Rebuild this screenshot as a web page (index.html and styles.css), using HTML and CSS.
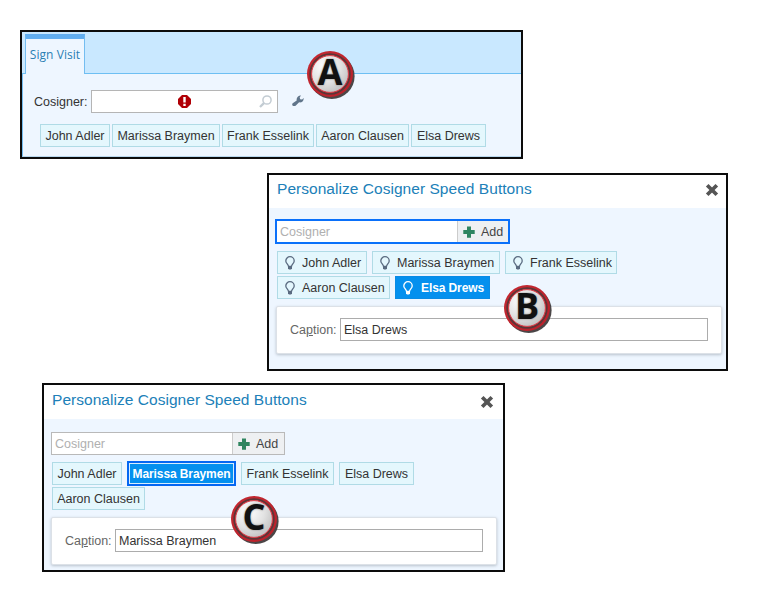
FILE: index.html
```html
<!DOCTYPE html>
<html lang="en">
<head>
<meta charset="utf-8">
<title>Cosigner speed buttons</title>
<link rel="stylesheet" href="styles.css">
</head>
<body>
<svg class="defs" width="0" height="0" aria-hidden="true">
  <defs>
    <radialGradient id="face" cx=".35" cy=".3" r=".8"><stop offset="0" stop-color="#fff"/><stop offset=".55" stop-color="#e2e2e2"/><stop offset="1" stop-color="#bdbdbd"/></radialGradient>
    <linearGradient id="ring" x1="0" y1="0" x2="1" y2="1"><stop offset="0" stop-color="#c9202a"/><stop offset=".2" stop-color="#c22831"/><stop offset="1" stop-color="#b9202a"/></linearGradient>
    <symbol id="disc" viewBox="0 0 50 50">
      <circle cx="25.8" cy="26.2" r="22.8" fill="#4b4647"/>
      <circle cx="24" cy="24" r="23" fill="url(#ring)"/>
      <circle cx="24" cy="24" r="19.8" fill="none" stroke="#5d3638" stroke-width="1.8"/>
      <circle cx="24" cy="24" r="18.4" fill="url(#face)" stroke="#d9404a" stroke-width="1"/>
    </symbol>
    <symbol id="bulb" viewBox="0 0 12 14"><path d="M4.500 10.300C4.300 8.200 1.800 7.300 1.800 4.900a4.200 4.200 0 0 1 8.400 0C10.200 7.300 7.700 8.200 7.500 10.300Z" fill="none" stroke="currentColor" stroke-width="1.3"/><path d="M4 10h4v2.600l-1 1H5l-1-1Z" fill="currentColor"/></symbol>
    <symbol id="plus" viewBox="0 0 12 12"><path d="M4 .5h4V4h3.700v4H8v3.700H4V8H.3V4H4Z" fill="#2f8560"/></symbol>
    <symbol id="close" viewBox="0 0 14 14"><path d="M2.200 2.200 11.800 11.800M11.800 2.200 2.200 11.800" stroke="#555" stroke-width="3.700"/></symbol>
  </defs>
</svg>
<main>
  <section class="panel sign">
    <header class="tabs"><div class="tab">Sign Visit</div></header>
    <div class="sign-body">
      <div class="field">
        <label>Cosigner:</label>
        <div class="lookup">
          <svg class="error" viewBox="0 0 13 13"><path d="M4 0h5l4 4v5l-4 4H4L0 9V4Z" fill="#b00006"/><path d="M5.300 2h2.400v5.500H5.300ZM5.300 8.700h2.400v2.200H5.300Z" fill="#fff"/></svg>
          <svg class="search" viewBox="0 0 13 13"><circle cx="8" cy="5" r="4.100" fill="none" stroke="#c3ccd3" stroke-width="1.500"/><path d="M4.900 8.100 1 12" stroke="#c3ccd3" stroke-width="2.300"/></svg>
        </div>
        <svg class="wrench" viewBox="0 0 12 12"><path d="M.7 8.300 4.700 5.500C4.200 2.700 6.100.4 9.100.5L7.700 2.300l.5 1.900 1.900.3 1.500-1.500C12 5.800 9.700 7.800 7.100 7.300L3.600 10.700C1.600 12-.9 10 .7 8.300Z" fill="#60758a"/></svg>
      </div>
      <div class="buttons">
        <span class="btn w70">John Adler</span><span class="btn w108">Marissa Braymen</span><span class="btn w92">Frank Esselink</span><span class="btn w93">Aaron Clausen</span><span class="btn w75">Elsa Drews</span>
      </div>
    </div>
    <div class="badge"><svg><use href="#disc"/></svg><b>A</b></div>
  </section>

  <section class="panel dialog bulbs">
    <header class="title"><h2>Personalize Cosigner Speed Buttons</h2><svg class="x"><use href="#close"/></svg></header>
    <div class="content">
      <div class="combo focused"><span class="hint">Cosigner</span><span class="add"><svg><use href="#plus"/></svg><span>Add</span></span></div>
      <div class="buttons">
        <span class="btn w90"><svg><use href="#bulb"/></svg>John Adler</span><span class="btn w128"><svg><use href="#bulb"/></svg>Marissa Braymen</span><span class="btn w112"><svg><use href="#bulb"/></svg>Frank Esselink</span>
      </div>
      <div class="buttons">
        <span class="btn w113"><svg><use href="#bulb"/></svg>Aaron Clausen</span><span class="btn w95 active"><svg><use href="#bulb"/></svg>Elsa Drews</span>
      </div>
      <div class="card"><label>Ca<u>p</u>tion:</label><div class="input">Elsa Drews</div></div>
    </div>
    <div class="badge"><svg><use href="#disc"/></svg><b>B</b></div>
  </section>

  <section class="panel dialog plain">
    <header class="title"><h2>Personalize Cosigner Speed Buttons</h2><svg class="x"><use href="#close"/></svg></header>
    <div class="content">
      <div class="combo"><span class="hint">Cosigner</span><span class="add"><svg><use href="#plus"/></svg><span>Add</span></span></div>
      <div class="buttons">
        <span class="btn w70">John Adler</span><span class="btn w109 active ringed">Marissa Braymen</span><span class="btn w93">Frank Esselink</span><span class="btn w75">Elsa Drews</span>
      </div>
      <div class="buttons"><span class="btn w93">Aaron Clausen</span></div>
      <div class="card"><label>Ca<u>p</u>tion:</label><div class="input">Marissa Braymen</div></div>
    </div>
    <div class="badge"><svg><use href="#disc"/></svg><b>C</b></div>
  </section>
</main>
</body>
</html>
```
FILE: styles.css
```css
* { box-sizing: border-box; }
body { margin: 0; background: #fff; color: #333; font: 12.5px/15px "Liberation Sans", Arial, sans-serif; letter-spacing: 0; }
.defs { position: absolute; }
main { width: 776px; height: 600px; padding-top: 30px; overflow: hidden; }
svg { display: block; flex: none; }

.panel { position: relative; border: 2px solid #0c0c0c; background: #eef6ff; }
.sign { width: 503px; height: 129px; margin-left: 20px; }
.tabs { display: flex; height: 42px; padding: 2px 0 0 3px; background: #c9e8ff; border-bottom: 1px solid #6dbff3; }
.tab { width: 60px; height: 40px; padding-top: 7px; border: 1px solid #74bdf0; border-top: 5px solid #62aef0; border-bottom: 0; background: #eef6ff; color: #2a7fb4; font: 12px/17px "Open Sans", sans-serif; letter-spacing: .05px; text-align: center; white-space: nowrap; }
.sign-body { height: 83px; padding: 16px 0 0 11px; border-left: 1px solid #74bdf0; border-bottom: 1px solid #b9d8ee; }
.field { display: flex; align-items: center; }
.field label { width: 57px; padding-top: 2px; }
.lookup { display: flex; align-items: center; width: 187px; height: 23px; padding: 0 5px 0 86px; border: 1px solid #b5b5b5; background: #fff; }
.error { width: 13px; height: 13px; }
.search { width: 13px; height: 13px; margin-left: auto; }
.wrench { width: 12px; height: 12px; margin: -1px 0 0 14px; }

.buttons { display: flex; }
.sign .buttons { gap: 2px; margin: 11px 0 0 6px; }
.btn { display: flex; align-items: center; justify-content: center; height: 23px; padding-top: 1px; border: 1px solid #b0dbe6; background: #e4f7fd; white-space: nowrap; }
.w70 { width: 70px; }
.w75 { width: 75px; }
.w90 { width: 90px; }
.w92 { width: 92px; }
.w93 { width: 93px; }
.w95 { width: 95px; }
.w108 { width: 108px; }
.w109 { width: 109px; }
.w112 { width: 112px; }
.w113 { width: 113px; }
.w128 { width: 128px; }
.active { border-color: #0a8be4; background: #0490ee; color: #fff; font-weight: bold; font-size: 12px; letter-spacing: -.1px; }
.ringed { height: 25px; margin: -1px 0; border: 2px solid #0567f2; box-shadow: inset 0 0 0 1px #d5edff; }

.title { display: flex; justify-content: space-between; background: #fff; }
.title h2 { margin: 0; color: #2080b8; font-size: 15.5px; line-height: 18px; font-weight: normal; letter-spacing: .04px; }
.x { width: 14px; height: 14px; }
.bulbs { width: 461px; height: 198px; margin: 14px 0 0 267px; }
.bulbs .title { height: 33px; padding: 5px 7.5px 0 8px; }
.bulbs .x { margin-top: 3px; }
.bulbs .content { padding: 11px 0 0 6px; }
.plain { width: 463px; height: 189px; margin: 12px 0 0 42px; }
.plain .title { height: 34px; padding: 6px 9px 0 8px; }
.plain .x { margin-top: 4px; }
.plain .content { padding: 13px 0 0 7px; }

.combo { display: flex; width: 234px; height: 23px; border: 1px solid #b9b9b9; background: #fff; }
.combo.focused { width: 235px; height: 25px; border: 2px solid #0a70fa; }
.hint { flex: 1; padding: 4px 3px 2px; color: #b0b0b0; }
.add { display: flex; align-items: center; gap: 6px; width: 52px; padding-left: 5px; border-left: 1px solid #ccc; background: #eef0f2; color: #444; }
.add span { padding-top: 2px; }
.focused .add { width: 51px; }
.add svg { width: 12px; height: 12px; }

.dialog .buttons { gap: 5px; margin: 2px 0 0 2px; }
.dialog .combo + .buttons { margin-top: 7px; }
.plain .buttons { margin-left: 1px; }
.bulbs .btn { justify-content: flex-start; padding-left: 6px; }
.btn svg { width: 12px; height: 14px; margin-right: 6px; color: #5a6b80; }
.bulbs .active svg { margin-right: 7px; color: #fff; }

.card { display: flex; align-items: center; width: 446px; height: 48px; margin: 7px 0 0 1px; padding: 0 0 1px 13px; border: 1px solid #dce1e7; border-radius: 2px; background: #fff; box-shadow: 0 1px 3px #b8c2cc; }
.plain .card { margin-left: 0; }
.card label { width: 50px; padding-top: 2px; color: #666; }
.input { width: 368px; height: 23px; padding: 4px 3px 2px; border: 1px solid #acacac; }

.badge { position: absolute; display: flex; align-items: center; justify-content: center; width: 48px; height: 48px; }
.badge svg { position: absolute; top: 0; left: 0; width: 50px; height: 50px; }
.badge b { position: relative; top: -2px; left: 0; color: #111; font: bold 36px/46px "Open Sans", sans-serif; letter-spacing: 0; text-shadow: 0 0 2px #777; }
.sign .badge { left: 284px; top: 18px; }
.bulbs .badge { left: 234px; top: 109px; }
.plain .badge { left: 186px; top: 110px; }
```
